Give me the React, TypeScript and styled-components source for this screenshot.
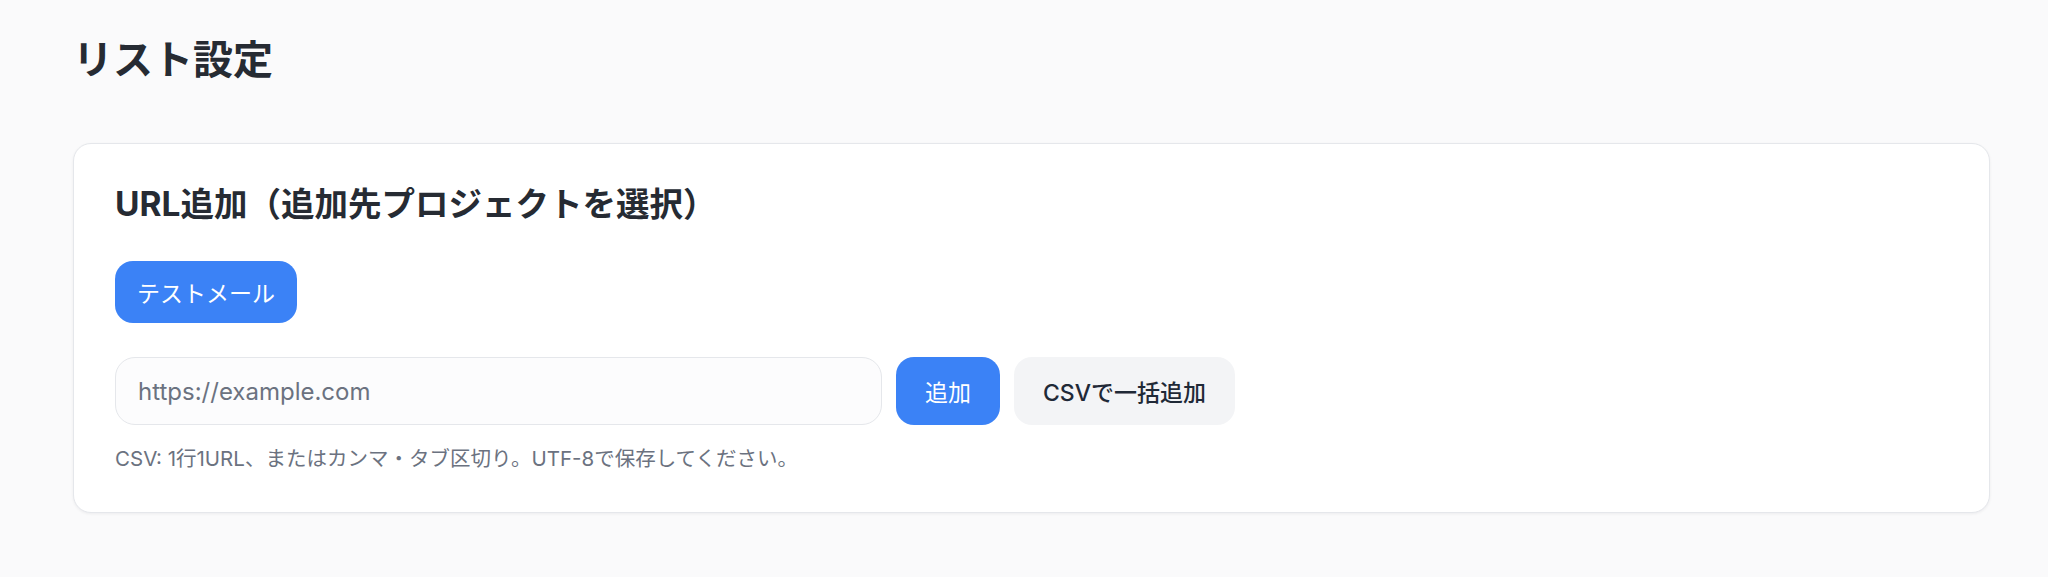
import React, { useState } from "react";
import styled, { createGlobalStyle } from "styled-components";

const GlobalStyle = createGlobalStyle`
  html, body {
    margin: 0;
    padding: 0;
    background: #fafafb;
  }
  body {
    font-family: Inter, "Noto Sans CJK JP", sans-serif;
    color: #1f2937;
    -webkit-font-smoothing: antialiased;
  }
`;

const Page = styled.main`
  padding: 35px 58px 60px 73px;
`;

const PageTitle = styled.h1`
  margin: 0 0 58px;
  font-size: 40px;
  line-height: 50px;
  font-weight: 700;
  color: #262b33;
`;

const Card = styled.section`
  background: #fff;
  border: 1px solid #e5e7eb;
  border-radius: 18px;
  box-shadow: 0 1px 3px rgba(15, 23, 42, 0.06);
  padding: 38px 41px 39px;
`;

const CardTitle = styled.h2`
  margin: 0 0 35px;
  font-size: 33.5px;
  line-height: 44px;
  font-weight: 700;
  color: #262b33;
`;

const Button = styled.button<{ $variant?: "primary" | "secondary" }>`
  border: none;
  border-radius: 18px;
  padding: 0 29px;
  font-family: inherit;
  font-size: 23px;
  cursor: pointer;
  white-space: nowrap;
  background: ${(p) => (p.$variant === "secondary" ? "#f3f4f6" : "#3b82f6")};
  color: ${(p) => (p.$variant === "secondary" ? "#1f2937" : "#fff")};
  font-weight: ${(p) => (p.$variant === "secondary" ? 500 : 400)};
`;

const TestButton = styled(Button)`
  display: block;
  height: 62px;
  padding: 0 22px;
`;

const Row = styled.div`
  display: flex;
  gap: 14px;
  margin-top: 34px;
  height: 68px;
`;

const UrlInput = styled.input`
  width: 767px;
  box-sizing: border-box;
  border: 1.5px solid #e5e7eb;
  border-radius: 20px;
  background: #fcfcfd;
  padding: 0 22px;
  font-family: inherit;
  font-size: 24px;
  color: #1f2937;
  outline: none;
  &::placeholder {
    color: #6b7280;
  }
`;

const Hint = styled.p`
  margin: 20px 0 0;
  font-size: 20.5px;
  line-height: 28px;
  color: #6b7280;
`;

export default function App() {
  const [url, setUrl] = useState("");

  return (
    <>
      <GlobalStyle />
      <Page>
        <PageTitle>リスト設定</PageTitle>
        <Card>
          <CardTitle>URL追加（追加先プロジェクトを選択）</CardTitle>
          <TestButton>テストメール</TestButton>
          <Row>
            <UrlInput
              placeholder="https://example.com"
              value={url}
              onChange={(e) => setUrl(e.target.value)}
            />
            <Button>追加</Button>
            <Button $variant="secondary">CSVで一括追加</Button>
          </Row>
          <Hint>CSV: 1行1URL、またはカンマ・タブ区切り。UTF-8で保存してください。</Hint>
        </Card>
      </Page>
    </>
  );
}
